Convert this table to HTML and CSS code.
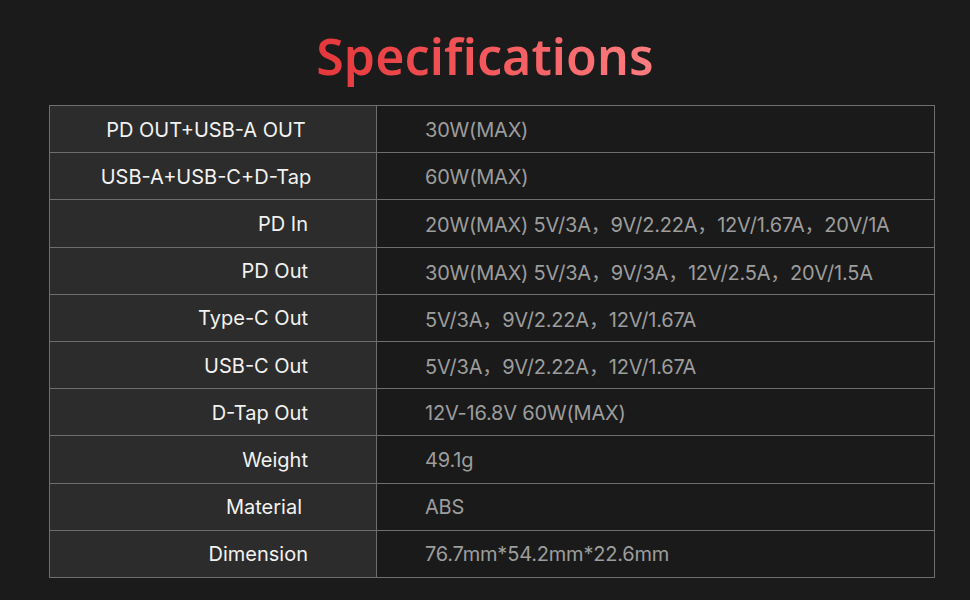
FILE: index.html
```html
<!DOCTYPE html>
<html lang="en">
<head>
<meta charset="utf-8">
<title>Specifications</title>
<link rel="stylesheet" href="styles.css">
</head>
<body>
<main class="page">
  <h1 class="title">Specifications</h1>
  <table class="spec">
    <tbody>
      <tr><th class="c">PD OUT+USB-A OUT</th><td>30W(MAX)</td></tr>
      <tr><th class="c">USB-A+USB-C+D-Tap</th><td>60W(MAX)</td></tr>
      <tr><th>PD In</th><td>20W(MAX) 5V/3A，9V/2.22A，12V/1.67A，20V/1A</td></tr>
      <tr><th>PD Out</th><td>30W(MAX) 5V/3A，9V/3A，12V/2.5A，20V/1.5A</td></tr>
      <tr><th>Type-C Out</th><td>5V/3A，9V/2.22A，12V/1.67A</td></tr>
      <tr><th>USB-C Out</th><td>5V/3A，9V/2.22A，12V/1.67A</td></tr>
      <tr><th>D-Tap Out</th><td>12V-16.8V 60W(MAX)</td></tr>
      <tr><th>Weight</th><td>49.1g</td></tr>
      <tr><th class="m">Material</th><td>ABS</td></tr>
      <tr><th>Dimension</th><td>76.7mm*54.2mm*22.6mm</td></tr>
    </tbody>
  </table>
</main>
</body>
</html>
```

FILE: styles.css
```css
html, body {
  margin: 0;
  padding: 0;
  background: #1b1b1b;
}
.page {
  width: 970px;
  height: 600px;
  box-sizing: border-box;
  padding-top: 22px;
  display: flex;
  flex-direction: column;
  align-items: center;
  font-family: "Inter", "Noto Sans CJK SC", sans-serif;
}
.title {
  margin: 0 0 14px 0;
  font-family: "Noto Sans", sans-serif;
  font-size: 50px;
  line-height: 69px;
  font-weight: 600;
  letter-spacing: 0.1px;
  background: linear-gradient(90deg, #e5373b 0%, #f4585c 50%, #fe7d80 100%);
  -webkit-background-clip: text;
  background-clip: text;
  color: transparent;
}
.spec {
  align-self: flex-start;
  width: 886px;
  margin-left: 49px;
  border-collapse: collapse;
  table-layout: fixed;
}
.spec tr {
  height: 47.2px;
}
.spec th, .spec td {
  border: 1px solid #6e6e6e;
  font-size: 20px;
  font-weight: 400;
  padding: 1px 0 0 0;
  white-space: nowrap;
}
.spec th {
  width: 327px;
  background: #2c2c2c;
  color: #f2f2f2;
  text-align: right;
  padding-right: 68px;
  box-sizing: border-box;
}
.spec th.c {
  text-align: center;
  padding-right: 14px;
}
.spec th.m {
  padding-right: 74px;
}
.spec td {
  background: #1a1a1a;
  color: #9d9d9d;
  padding-left: 48px;
  letter-spacing: -0.2px;
}
```
